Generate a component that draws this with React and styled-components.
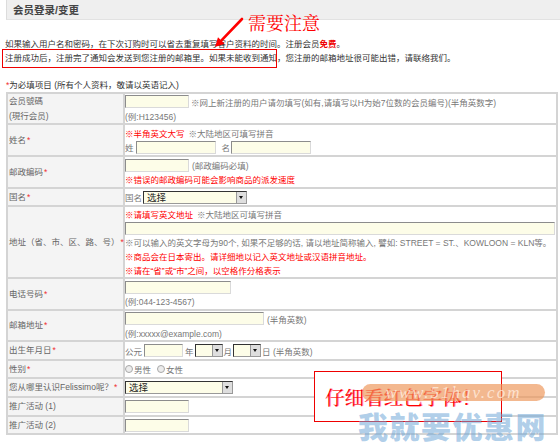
import React from "react";
import styled, { createGlobalStyle } from "styled-components";

const GlobalStyle = createGlobalStyle`
  html, body {
    margin: 0;
    padding: 0;
    background: #fff;
  }
  body {
    font-family: "Liberation Sans", "Noto Sans CJK SC", sans-serif;
  }
`;

function App() {
  return (
    <Page>
      <GlobalStyle />
      <TitleBar>
        <Title>会员登录/变更</Title>
      </TitleBar>

      <Intro>
        <div>
          如果输入用户名和密码，在下次订购时可以省去重复填写客户资料的时间。注册会员<Free>免费</Free>。
        </div>
        <div>
          注册成功后，注册完了通知会发送到您注册的邮箱里。如果未能收到通知，您注册的邮箱地址很可能出错，请联络我们。
        </div>
      </Intro>

      <RequiredNote>
        <Star>*</Star>为必填项目 (所有个人资料，敬请以英语记入)
      </RequiredNote>

      <FormGrid>
        <LabelCell>
          <div>会员號碼</div>
          <div>(現行会员)</div>
        </LabelCell>
        <ValueCell>
          <Line>
            <TextInput $w={64} />
            <Hint $gap={2}>※网上新注册的用户请勿填写(如有,请填写以H为始7位数的会员编号)(半角英数字)</Hint>
          </Line>
          <Line>
            <Hint>(例:H123456)</Hint>
          </Line>
        </ValueCell>

        <LabelCell>
          <div>
            姓名<Star>*</Star>
          </div>
        </LabelCell>
        <ValueCell>
          <Line>
            <Red>※半角英文大写</Red>
            <Hint $gap={4}>※大陆地区可填写拼音</Hint>
          </Line>
          <Line>
            <Hint>姓</Hint>
            <TextInput $w={80} $gap={2} />
            <Hint $gap={6}>名</Hint>
            <TextInput $w={80} $gap={1} />
          </Line>
        </ValueCell>

        <LabelCell>
          <div>
            邮政编码<Star>*</Star>
          </div>
        </LabelCell>
        <ValueCell>
          <Line>
            <TextInput $w={64} />
            <Hint $gap={3}>(邮政编码必填)</Hint>
          </Line>
          <Line>
            <Red>※错误的邮政编码可能会影响商品的派发速度</Red>
          </Line>
        </ValueCell>

        <LabelCell>
          <div>
            国名<Star>*</Star>
          </div>
        </LabelCell>
        <ValueCell>
          <Line>
            <Hint>国名</Hint>
            <FakeSelect $w={104} $gap={1}>
              选择
              <SelectArrow />
            </FakeSelect>
          </Line>
        </ValueCell>

        <LabelCell>
          <div>
            地址（省、市、区、路、号）<Star>*</Star>
          </div>
        </LabelCell>
        <ValueCell>
          <Line>
            <Red>※请填写英文地址</Red>
            <Hint $gap={4}>※大陆地区可填写拼音</Hint>
          </Line>
          <Line>
            <TextInput $full />
          </Line>
          <Line>
            <Hint>
              ※可以输入的英文字母为90个, 如果不足够的话, 请以地址简称输入, 譬如: STREET = ST.、KOWLOON = KLN等。
            </Hint>
          </Line>
          <Line>
            <Red>※商品会在日本寄出。请详细地以记入英文地址或汉语拼音地址。</Red>
          </Line>
          <Line>
            <Red>※请在“省”或“市”之间，以空格作分格表示</Red>
          </Line>
        </ValueCell>

        <LabelCell>
          <div>
            电话号码<Star>*</Star>
          </div>
        </LabelCell>
        <ValueCell>
          <Line>
            <TextInput $w={106} />
          </Line>
          <Line>
            <Hint>(例:044-123-4567)</Hint>
          </Line>
        </ValueCell>

        <LabelCell>
          <div>
            邮箱地址<Star>*</Star>
          </div>
        </LabelCell>
        <ValueCell>
          <Line>
            <TextInput $w={139} />
            <Hint $gap={3}>(半角英数)</Hint>
          </Line>
          <Line>
            <Hint>(例:xxxxx@example.com)</Hint>
          </Line>
        </ValueCell>

        <LabelCell>
          <div>
            出生年月日<Star>*</Star>
          </div>
        </LabelCell>
        <ValueCell>
          <Line>
            <Hint>公元</Hint>
            <TextInput $w={39} $gap={2} />
            <Hint $gap={2}>年</Hint>
            <FakeSelect $w={28} $gap={1}>
              <SelectArrow />
            </FakeSelect>
            <Hint $gap={1}>月</Hint>
            <FakeSelect $w={28} $gap={1}>
              <SelectArrow />
            </FakeSelect>
            <Hint $gap={1}>日 (半角英数)</Hint>
          </Line>
        </ValueCell>

        <LabelCell>
          <div>
            性别<Star>*</Star>
          </div>
        </LabelCell>
        <ValueCell>
          <Line>
            <Radio />
            <Hint>男性</Hint>
            <Radio $gap={6} />
            <Hint>女性</Hint>
          </Line>
        </ValueCell>

        <LabelCell>
          <div>
            您从哪里认识Felissimo呢？<Star>*</Star>
          </div>
        </LabelCell>
        <ValueCell>
          <Line>
            <FakeSelect $w={108}>
              选择
              <SelectArrow />
            </FakeSelect>
          </Line>
        </ValueCell>

        <LabelCell>
          <div>推广活动 (1)</div>
        </LabelCell>
        <ValueCell>
          <Line>
            <TextInput $w={64} />
          </Line>
        </ValueCell>

        <LabelCell>
          <div>推广活动 (2)</div>
        </LabelCell>
        <ValueCell>
          <Line>
            <TextInput $w={64} />
          </Line>
        </ValueCell>
      </FormGrid>

      {/* annotations drawn over the page */}
      <Attention>需要注意</Attention>
      <ArrowMark viewBox="0 0 34 34" width="34" height="34">
        <line x1="30" y1="3" x2="9.5" y2="24.3" stroke="#f00" strokeWidth="2.6" strokeLinecap="round" />
        <polygon points="3,31 12.6,27.7 6,21.3" fill="#f00" />
      </ArrowMark>
      <HighlightBox />

      <Callout>仔细看红色字体！</Callout>
      <WatermarkPill>www.51hav.com</WatermarkPill>
      <WatermarkText>我就要优惠网</WatermarkText>
    </Page>
  );
}

export default App;

const Page = styled.div`
  position: relative;
  width: 560px;
  height: 447px;
  overflow: hidden;
  font-size: 8.5px;
  color: #333;
`;

const TitleBar = styled.div`
  margin-left: 6px;
  height: 20px;
  box-sizing: border-box;
  padding-left: 6px;
  background: #efefef;
  border-left: 1px solid #dcdcdc;
  border-bottom: 1px solid #e2e2e2;
  display: flex;
  align-items: center;
`;

const Title = styled.h1`
  margin: 0;
  font-size: 10.5px;
  font-weight: 700;
  color: #444;
`;

const Intro = styled.div`
  margin-top: 18px;
  padding-left: 5px;
  line-height: 13.5px;
  white-space: nowrap;
  color: #333;
`;

const Free = styled.span`
  color: #e00;
  font-weight: 700;
`;

const RequiredNote = styled.div`
  margin-top: 14px;
  padding-left: 5px;
  line-height: 13px;
  color: #333;
`;

const Star = styled.span`
  color: #f03030;
  margin-left: 1px;
`;

const FormGrid = styled.div`
  margin-left: 6px;
  width: 552px;
  box-sizing: border-box;
  padding: 2px;
  display: grid;
  grid-template-columns: 115px 1fr;
  grid-template-rows: 29px 30px 30px 16px 70px 30px 29px 17px 16px 17px 17px 16px;
  gap: 2px;
  background: #d4d4d4;
`;

const LabelCell = styled.div`
  background: #f4f4f4;
  padding-left: 1px;
  color: #666;
  line-height: 14.5px;
  display: flex;
  flex-direction: column;
  justify-content: center;
  white-space: nowrap;
`;

const ValueCell = styled.div`
  background: #fff;
  display: flex;
  flex-direction: column;
  justify-content: center;
  overflow: hidden;
`;

const Line = styled.div`
  height: 14px;
  display: flex;
  align-items: center;
  white-space: nowrap;
`;

const Hint = styled.span`
  color: #777;
  margin-left: ${(p) => p.$gap || 0}px;
`;

const Red = styled.span`
  color: #f00;
`;

const TextInput = styled.span`
  display: inline-block;
  flex: ${(p) => (p.$full ? "1" : "none")};
  width: ${(p) => (p.$full ? "auto" : `${p.$w}px`)};
  height: 13px;
  margin-left: ${(p) => p.$gap || 0}px;
  margin-right: ${(p) => (p.$full ? 1 : 0)}px;
  box-sizing: border-box;
  border: 1px solid;
  border-color: #8c8c8c #dadada #dadada #8c8c8c;
  background: #fdfde8;
`;

const FakeSelect = styled.span`
  display: inline-flex;
  align-items: center;
  justify-content: space-between;
  flex: none;
  width: ${(p) => p.$w}px;
  height: 13px;
  margin-left: ${(p) => p.$gap || 0}px;
  box-sizing: border-box;
  padding-left: 3px;
  border: 1px solid;
  border-color: #333 #999 #999 #333;
  background: #fdfde8;
  font-size: 9.5px;
  color: #222;
  line-height: 11px;
`;

const SelectArrow = styled.span`
  position: relative;
  margin-left: auto;
  width: 10px;
  height: 11px;
  flex: none;
  box-sizing: border-box;
  border-left: 1px solid #999;
  background: #dedede;

  &::after {
    content: "";
    position: absolute;
    left: 2px;
    top: 4px;
    border-left: 2.5px solid transparent;
    border-right: 2.5px solid transparent;
    border-top: 3px solid #111;
  }
`;

const Radio = styled.span`
  display: inline-block;
  flex: none;
  width: 8px;
  height: 8px;
  margin-left: ${(p) => p.$gap || 0}px;
  margin-right: 1px;
  box-sizing: border-box;
  border-radius: 50%;
  border: 1px solid #a8a8a8;
  background: #ececec;
`;

const Attention = styled.div`
  position: absolute;
  left: 248px;
  top: 11px;
  font-family: "Noto Serif CJK SC", "Noto Sans CJK SC", serif;
  font-size: 18px;
  line-height: 22px;
  color: #f00;
`;

const ArrowMark = styled.svg`
  position: absolute;
  left: 212px;
  top: 16px;
`;

const HighlightBox = styled.div`
  position: absolute;
  left: 2px;
  top: 49px;
  width: 275px;
  height: 19px;
  box-sizing: border-box;
  border: 1px solid #e00;
`;

const Callout = styled.div`
  position: absolute;
  left: 314px;
  top: 371px;
  width: 188px;
  height: 51px;
  box-sizing: border-box;
  padding-left: 10px;
  border: 1px solid #e00;
  background: #fff;
  display: flex;
  align-items: center;
  font-family: "Noto Serif CJK SC", "Noto Sans CJK SC", serif;
  font-size: 19.5px;
  color: #f00;
  text-shadow: 1px 0 0 #ff8fb0;
`;

const WatermarkPill = styled.div`
  position: absolute;
  left: 362px;
  top: 384px;
  width: 183px;
  height: 17px;
  border-radius: 9px;
  background: rgba(238, 150, 90, 0.68);
  font-family: "Liberation Serif", serif;
  font-style: italic;
  font-size: 17px;
  line-height: 17px;
  letter-spacing: 2px;
  text-align: center;
  color: rgba(255, 238, 225, 0.8);
  pointer-events: none;
`;

const WatermarkText = styled.div`
  position: absolute;
  left: 358px;
  top: 405px;
  font-family: "Noto Sans CJK SC", sans-serif;
  font-size: 30px;
  font-weight: 900;
  line-height: 40px;
  letter-spacing: 1.5px;
  color: rgba(110, 165, 215, 0.55);
  pointer-events: none;
`;
